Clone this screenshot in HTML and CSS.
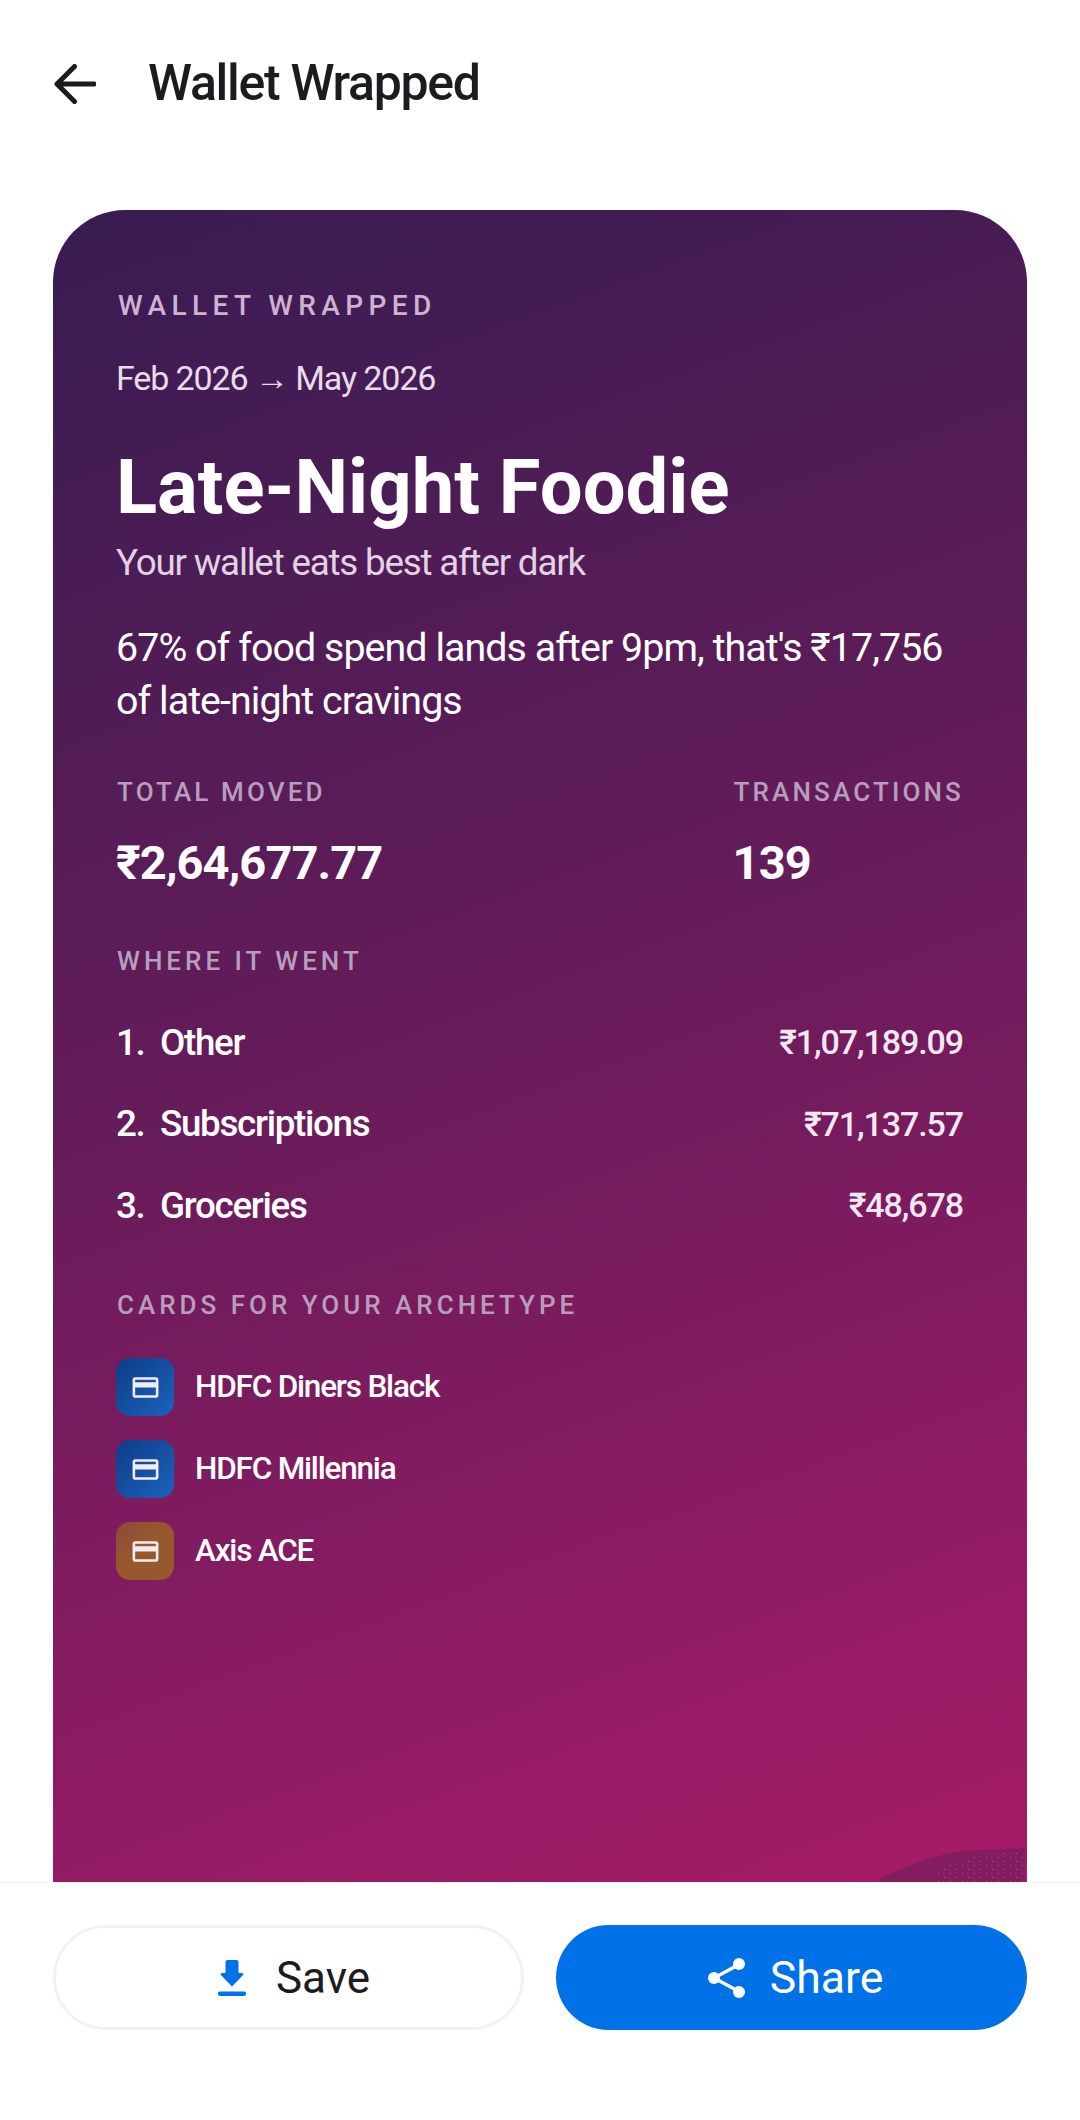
FILE: index.html
```html
<!DOCTYPE html>
<html lang="en">
<head>
    <meta charset="UTF-8">
    <meta name="viewport" content="width=device-width, initial-scale=1.0">
    <title>Wallet Wrapped</title>
    <link rel="stylesheet" href="styles.css">
</head>
<body>
    <div class="screen">
        <header class="header">
            <svg class="back-icon" viewBox="0 0 42 40" fill="none" stroke="#1c1b1f" stroke-width="5" stroke-linecap="round" stroke-linejoin="round">
                <path d="M40 20H3M20.5 2.500L3 20l17.500 17.500"/>
            </svg>
            <h1>Wallet Wrapped</h1>
        </header>

        <main class="content">
            <section class="wrapped-card">
                <div class="eyebrow">WALLET WRAPPED</div>
                <div class="date-range">Feb 2026 → May 2026</div>
                <h2 class="archetype">Late-Night Foodie</h2>
                <div class="tagline">Your wallet eats best after dark</div>
                <p class="insight">67% of food spend lands after 9pm, that's ₹17,756 of late-night cravings</p>

                <div class="stats">
                    <div>
                        <div class="label">TOTAL MOVED</div>
                        <div class="stat-value">₹2,64,677.77</div>
                    </div>
                    <div class="stat-right">
                        <div class="label">TRANSACTIONS</div>
                        <div class="stat-value">139</div>
                    </div>
                </div>

                <div class="label section-label where-label">WHERE IT WENT</div>
                <ul class="spend-list">
                    <li class="spend-row"><span class="spend-rank">1.</span><span class="spend-name">Other</span><span class="spend-amount">₹1,07,189.09</span></li>
                    <li class="spend-row"><span class="spend-rank">2.</span><span class="spend-name">Subscriptions</span><span class="spend-amount">₹71,137.57</span></li>
                    <li class="spend-row"><span class="spend-rank">3.</span><span class="spend-name">Groceries</span><span class="spend-amount">₹48,678</span></li>
                </ul>

                <div class="label section-label cards-label">CARDS FOR YOUR ARCHETYPE</div>
                <ul class="card-list">
                    <li class="card-row">
                        <span class="card-thumb hdfc">
                            <svg viewBox="0 0 24 24" fill="#f1ecf3"><path d="M20 4H4c-1.11 0-1.99.89-1.99 2L2 18c0 1.11.89 2 2 2h16c1.11 0 2-.89 2-2V6c0-1.11-.89-2-2-2zm0 14H4v-6h16v6zm0-10H4V6h16v2z"/></svg>
                        </span>
                        <span class="card-name">HDFC Diners Black</span>
                    </li>
                    <li class="card-row">
                        <span class="card-thumb hdfc">
                            <svg viewBox="0 0 24 24" fill="#f1ecf3"><path d="M20 4H4c-1.11 0-1.99.89-1.99 2L2 18c0 1.11.89 2 2 2h16c1.11 0 2-.89 2-2V6c0-1.11-.89-2-2-2zm0 14H4v-6h16v6zm0-10H4V6h16v2z"/></svg>
                        </span>
                        <span class="card-name">HDFC Millennia</span>
                    </li>
                    <li class="card-row">
                        <span class="card-thumb axis">
                            <svg viewBox="0 0 24 24" fill="#f1ecf3"><path d="M20 4H4c-1.11 0-1.99.89-1.99 2L2 18c0 1.11.89 2 2 2h16c1.11 0 2-.89 2-2V6c0-1.11-.89-2-2-2zm0 14H4v-6h16v6zm0-10H4V6h16v2z"/></svg>
                        </span>
                        <span class="card-name">Axis ACE</span>
                    </li>
                </ul>

                <svg class="corner-art" viewBox="0 0 150 40">
                    <defs>
                        <pattern id="dots" width="12" height="8" patternUnits="userSpaceOnUse">
                            <rect x="1" y="1" width="1" height="1" fill="#b45a96"/>
                            <rect x="7" y="5" width="1" height="1" fill="#b45a96"/>
                        </pattern>
                    </defs>
                    <path d="M3 40V30C30 18 60 6 85 3L148 0V40Z" fill="#841d60"/>
                    <path d="M60 40V24L90 8L146 3V40Z" fill="url(#dots)"/>
                </svg>
            </section>
        </main>

        <footer class="actions">
            <button class="btn btn-save">
                <svg class="save-icon" viewBox="0 0 28 36" fill="#0071e6">
                    <path d="M9.500 0h9a2 2 0 0 1 2 2v11h3.400c1.200 0 1.800 1.400 1 2.200L14 26.500 3.100 15.200c-.8-.8-.2-2.200 1-2.200h3.400V2a2 2 0 0 1 2-2z"/>
                    <rect x="0" y="31.500" width="28" height="4.500" rx="2"/>
                </svg>
                Save
            </button>
            <button class="btn btn-share">
                <svg class="share-icon" viewBox="0 0 37 40" fill="#fff" stroke="#fff">
                    <path d="M31 6.500L6 20l25 13.500" fill="none" stroke-width="3.400"/>
                    <circle cx="31" cy="6" r="6" stroke="none"/>
                    <circle cx="6" cy="20" r="6" stroke="none"/>
                    <circle cx="31" cy="34" r="6" stroke="none"/>
                </svg>
                Share
            </button>
        </footer>
    </div>
</body>
</html>
```

FILE: styles.css
```css
* {
    margin: 0;
    padding: 0;
    box-sizing: border-box;
    font-family: 'Roboto', 'Noto Sans', sans-serif;
}

body {
    background: #fff;
    color: #1c1b1f;
}

.screen {
    width: 1080px;
    height: 2120px;
    display: flex;
    flex-direction: column;
    overflow: hidden;
}

.header {
    height: 166px;
    flex-shrink: 0;
    display: flex;
    align-items: center;
    padding-left: 54px;
    gap: 52px;
}

.back-icon {
    width: 42px;
    height: 40px;
    margin-top: 2px;
}

h1 {
    font-size: 50px;
    font-weight: 500;
    letter-spacing: -1.300px;
    color: #1c1b1f;
}

.content {
    flex: 1;
    min-height: 0;
    overflow: hidden;
    padding: 44px 53px 0;
}

.wrapped-card {
    position: relative;
    height: 1750px;
    padding: 80px 63px 0;
    border-radius: 72px 72px 0 0;
    background: linear-gradient(160deg, #371c52 0%, #5e1c58 38%, #a81b68 97%);
    color: #fff;
}

.eyebrow {
    padding-left: 2px;
    font-size: 28px;
    line-height: 32px;
    font-weight: 500;
    letter-spacing: 5.400px;
    color: #cdb3d0;
}

.date-range {
    margin-top: 34px;
    font-size: 34px;
    line-height: 44px;
    letter-spacing: -1.100px;
    color: #e8dcea;
}

.archetype {
    margin-top: 42px;
    font-size: 76px;
    line-height: 90px;
    font-weight: 700;
}

.tagline {
    margin-top: 9px;
    font-size: 36.750px;
    line-height: 44px;
    letter-spacing: -1.200px;
    color: #e2d2e3;
}

.insight {
    margin-top: 36px;
    font-size: 39.400px;
    line-height: 53px;
    letter-spacing: -0.950px;
}

.stats {
    margin-top: 50px;
    display: flex;
    justify-content: space-between;
}

.label {
    text-indent: 1px;
    font-size: 26px;
    line-height: 30px;
    font-weight: 500;
    letter-spacing: 3.150px;
    color: #b89ebc;
}

.section-label {
    letter-spacing: 4px;
}

.stat-value {
    margin-top: 29px;
    font-size: 47px;
    line-height: 54px;
    font-weight: 700;
    letter-spacing: -0.900px;
}

.where-label {
    margin-top: 56px;
}

.spend-list,
.card-list {
    list-style: none;
}

.spend-list {
    margin-top: 44px;
    display: flex;
    flex-direction: column;
    gap: 37.500px;
}

.spend-row {
    display: flex;
    align-items: center;
    height: 44px;
    font-size: 36.750px;
    font-weight: 500;
    letter-spacing: -1.300px;
}

.spend-rank {
    width: 44px;
}

.spend-name {
    flex: 1;
}

.spend-amount {
    padding-right: 1px;
    font-size: 34px;
    letter-spacing: -1.100px;
    color: #f1e8f1;
}

.cards-label {
    margin-top: 63px;
}

.card-list {
    margin-top: 38px;
    display: flex;
    flex-direction: column;
    gap: 24px;
}

.card-row {
    display: flex;
    align-items: center;
    gap: 21px;
    font-size: 31.500px;
    font-weight: 500;
    letter-spacing: -1.200px;
}

.card-name {
    margin-bottom: 2px;
}

.card-thumb {
    width: 58px;
    height: 58px;
    border-radius: 14px;
    display: flex;
    align-items: center;
    justify-content: center;
}

.card-thumb svg {
    width: 31px;
    height: 31px;
}

.hdfc {
    background: linear-gradient(135deg, #0d3c86, #1c63bd);
}

.axis {
    background: linear-gradient(135deg, #8a4a3e, #97582c 45%);
}

.corner-art {
    position: absolute;
    left: 824px;
    top: 1638px;
    width: 150px;
    height: 40px;
}

.actions {
    height: 238px;
    flex-shrink: 0;
    display: grid;
    grid-template-columns: 1fr 1fr;
    gap: 32px;
    padding: 42px 53px 0;
    background: #fff;
    border-top: 1px solid #f4f2f4;
}

.btn {
    height: 105px;
    border-radius: 53px;
    display: flex;
    align-items: center;
    justify-content: center;
    font-size: 44.600px;
}

.btn-save {
    gap: 30px;
    font-size: 44px;
    background: #fff;
    color: #1c1b1f;
    border: 3px solid #f4f1f2;
}

.btn-share {
    gap: 25px;
    background: #0071e6;
    color: #fff;
    border: none;
}

.save-icon {
    width: 28px;
    height: 36px;
    margin-left: 11px;
}

.share-icon {
    width: 37px;
    height: 40px;
    margin-left: 8px;
}
```
